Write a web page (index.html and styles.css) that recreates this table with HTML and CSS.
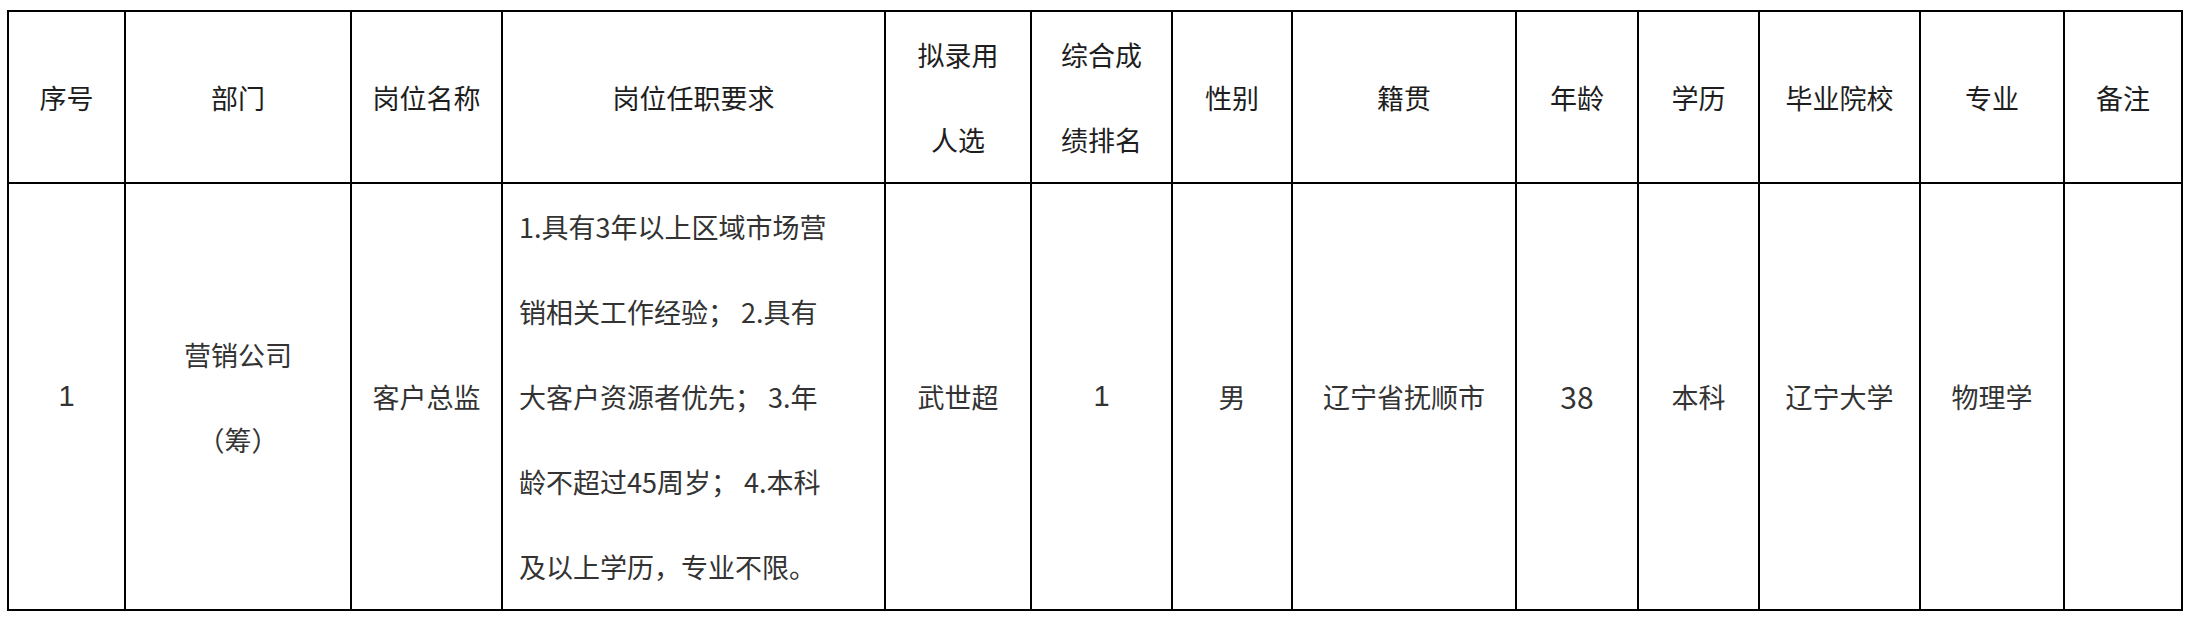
FILE: index.html
```html
<!DOCTYPE html>
<html lang="zh-CN">
<head>
<meta charset="utf-8">
<title>拟录用人选</title>
<link rel="stylesheet" href="styles.css">
</head>
<body>
<table class="roster">
  <colgroup>
    <col class="c-seq"><col class="c-dept"><col class="c-post"><col class="c-req">
    <col class="c-pick"><col class="c-rank"><col class="c-sex"><col class="c-home">
    <col class="c-age"><col class="c-edu"><col class="c-school"><col class="c-major"><col class="c-note">
  </colgroup>
  <thead>
    <tr class="head-row">
      <th>序号</th>
      <th>部门</th>
      <th>岗位名称</th>
      <th>岗位任职要求</th>
      <th>拟录用<br>人选</th>
      <th>综合成<br>绩排名</th>
      <th>性别</th>
      <th>籍贯</th>
      <th>年龄</th>
      <th>学历</th>
      <th>毕业院校</th>
      <th>专业</th>
      <th>备注</th>
    </tr>
  </thead>
  <tbody>
    <tr class="body-row">
      <td class="num">1</td>
      <td>营销公司<br>（筹）</td>
      <td>客户总监</td>
      <td class="req">1.具有3年以上区域市场营<br>销相关工作经验； 2.具有<br>大客户资源者优先； 3.年<br>龄不超过45周岁； 4.本科<br>及以上学历，专业不限。</td>
      <td>武世超</td>
      <td class="num">1</td>
      <td>男</td>
      <td>辽宁省抚顺市</td>
      <td class="age">38</td>
      <td>本科</td>
      <td>辽宁大学</td>
      <td>物理学</td>
      <td></td>
    </tr>
  </tbody>
</table>
</body>
</html>
```
FILE: styles.css
```css
html, body {
  margin: 0;
  background: #ffffff;
}
body {
  padding: 10px 0 0 7px;
  font-family: "Noto Sans CJK SC", "Noto Sans", sans-serif;
}
.roster {
  border-collapse: collapse;
  table-layout: fixed;
  width: 2176px;
}
.roster th,
.roster td {
  border: 2px solid #000;
  padding: 0;
  text-align: center;
  vertical-align: middle;
  line-height: 85px;
  font-size: 27px;
  overflow: hidden;
  white-space: nowrap;
}
.roster th {
  font-weight: normal;
  color: #1e1e1e;
}
.roster td {
  color: #333333;
}
.head-row { height: 171px; }
.body-row { height: 426px; }

.c-seq { width: 117px; }
.c-dept { width: 226px; }
.c-post { width: 151px; }
.c-req { width: 383px; }
.c-pick { width: 146px; }
.c-rank { width: 141px; }
.c-sex { width: 120px; }
.c-home { width: 224px; }
.c-age { width: 122px; }
.c-edu { width: 121px; }
.c-school { width: 161px; }
.c-major { width: 144px; }
.c-note { width: 118px; }

.roster td.req {
  text-align: left;
  padding-left: 16px;
  font-size: 27px;
}
.roster td.num {
  font-family: "Liberation Sans", Arial, sans-serif;
  font-size: 29px;
}
.roster td.age {
  font-size: 30px;
}
```
